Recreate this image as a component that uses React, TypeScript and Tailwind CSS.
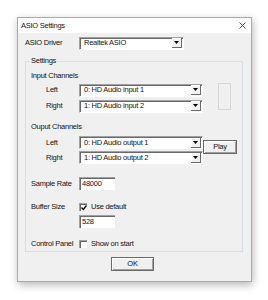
import React from 'react';

const font = { fontFamily: '"Liberation Sans", Arial, sans-serif' };

const Arrow = () => (
    <div className="w-[10px] h-[10px] bg-[#f0f0f0] border-r border-b border-[#696969] shadow-[inset_1px_1px_0_#ffffff] flex items-center justify-center">
        <svg width="5" height="3" viewBox="0 0 5 3">
            <path d="M0 0h5L2.5 3z" fill="#000" />
        </svg>
    </div>
);

const Combo = ({ text, w }: { text: string; w: string }) => (
    <div className={`${w} h-[13px] bg-white border-t border-l border-[#a0a0a0] border-r border-b border-r-white border-b-white shadow-[inset_1px_1px_0_#696969] flex items-center justify-between pl-[4px] pr-[1px]`}>
        <span className="text-[7.5px] tracking-[-0.25px] leading-none text-[#111]">{text}</span>
        <Arrow />
    </div>
);

const TextBox = ({ value }: { value: string }) => (
    <div className="w-[36px] h-[13px] bg-white border-t border-l border-[#a0a0a0] shadow-[inset_1px_1px_0_#696969] flex items-center pl-[2px]">
        <span className="text-[7.5px] tracking-[-0.25px] leading-none text-[#111]">{value}</span>
    </div>
);

const Check = ({ checked }: { checked?: boolean }) => (
    <div className="w-[8px] h-[8px] bg-white border-t border-l border-[#a0a0a0] shadow-[inset_1px_1px_0_#696969] flex items-center justify-center">
        {checked && (
            <svg width="6" height="6" viewBox="0 0 6 6">
                <path d="M0.5 2.5l1.8 2 3.2-4" stroke="#000" strokeWidth="1.3" fill="none" />
            </svg>
        )}
    </div>
);

const Button = ({ label, w }: { label: string; w: string }) => (
    <div className={`${w} h-[14px] bg-[#f0f0f0] border border-[#696969] shadow-[inset_1px_1px_0_#ffffff,inset_-1px_-1px_0_#a0a0a0] flex items-center justify-center`}>
        <span className="text-[7.5px] tracking-[-0.25px] leading-none text-[#111]">{label}</span>
    </div>
);

const Label = ({ children, cls = '' }: { children: React.ReactNode; cls?: string }) => (
    <span className={`text-[7.5px] tracking-[-0.25px] leading-none whitespace-nowrap text-[#111] ${cls}`}>{children}</span>
);

const Row = ({ label, text }: { label: string; text: string }) => (
    <div className="flex items-center h-[13px]">
        <Label cls="w-[48px] pl-[15px]">{label}</Label>
        <Combo text={text} w="w-[124px]" />
    </div>
);

export default function App() {
    return (
        <div className="w-[268px] h-[300px] bg-white pl-[17px] pt-[17px]" style={font}>
            <div className="w-[235px] h-[265px] border border-[#aaaaaa] bg-[#f0f0f0] shadow-[1px_3px_8px_rgba(0,0,0,0.28)] flex flex-col">
                <div className="h-[15px] bg-white flex items-center justify-between pl-[3px] pr-[5px]">
                    <Label>ASIO Settings</Label>
                    <svg width="7" height="7" viewBox="0 0 7 7">
                        <path d="M0.5 0.5l6 6M6.5 0.5l-6 6" stroke="#333" strokeWidth="0.9" />
                    </svg>
                </div>
                <div className="flex items-center h-[14px] mt-[3px] pl-[7px]">
                    <Label cls="w-[54px]">ASIO Driver</Label>
                    <Combo text="Realtek ASIO" w="w-[105px]" />
                </div>
                <div className="ml-[7px] mt-[11px] w-[218px] h-[191px] border border-[#d5dfe5] relative flex flex-col pl-[5px]">
                    <Label cls="absolute -top-[5px] left-[4px] bg-[#f0f0f0] px-[1px]">Settings</Label>
                    <Label cls="mt-[10px]">Input Channels</Label>
                    <div className="flex mt-[4px]">
                        <div className="flex flex-col gap-[3px]">
                            <Row label="Left" text="0: HD Audio input 1" />
                            <Row label="Right" text="1: HD Audio input 2" />
                        </div>
                        <div className="ml-[15px] -mt-[1px] w-[13px] h-[27px] border border-[#d5d5d5]" />
                    </div>
                    <Label cls="mt-[10px]">Ouput Channels</Label>
                    <div className="flex mt-[6px]">
                        <div className="flex flex-col gap-[2px]">
                            <Row label="Left" text="0: HD Audio output 1" />
                            <Row label="Right" text="1: HD Audio output 2" />
                        </div>
                        <div className="mt-[4px]">
                            <Button label="Play" w="w-[34px]" />
                        </div>
                    </div>
                    <div className="flex items-center mt-[13px]">
                        <Label cls="w-[48px]">Sample Rate</Label>
                        <TextBox value="48000" />
                    </div>
                    <div className="flex items-center mt-[13px]">
                        <Label cls="w-[48px]">Buffer Size</Label>
                        <Check checked />
                        <Label cls="ml-[4px]">Use default</Label>
                    </div>
                    <div className="flex mt-[4px] pl-[48px]">
                        <TextBox value="528" />
                    </div>
                    <div className="flex items-center mt-[12px]">
                        <Label cls="w-[48px]">Control Panel</Label>
                        <Check />
                        <Label cls="ml-[4px]">Show on start</Label>
                    </div>
                </div>
                <div className="flex justify-center mt-[5px] pr-[4px]">
                    <Button label="OK" w="w-[43px]" />
                </div>
            </div>
        </div>
    );
}
